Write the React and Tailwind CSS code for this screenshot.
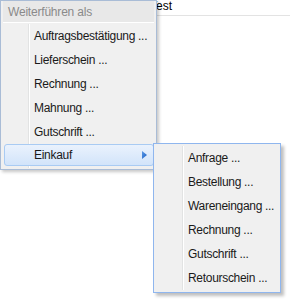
const mainItems = ['Auftragsbestätigung ...', 'Lieferschein ...', 'Rechnung ...', 'Mahnung ...', 'Gutschrift ...'];
const subItems = ['Anfrage ...', 'Bestellung ...', 'Wareneingang ...', 'Rechnung ...', 'Gutschrift ...', 'Retourschein ...'];

const font = { fontFamily: '"Liberation Sans", Arial, sans-serif' };

const MenuRow = ({ label }) => (
  <div className="h-[24px] flex items-center pl-[31px] text-[12px] tracking-[-0.3px] whitespace-nowrap text-[#1a1a1a]">{label}</div>
);

const App = () => {
  return (
    <div className="relative w-[290px] h-[301px] bg-white overflow-hidden" style={font}>
      {/* Background content behind the menus */}
      <div className="h-[16px] border-b border-[#e3e3e3] pl-[150px] text-[12px] leading-[13px] text-black whitespace-nowrap">Test</div>

      {/* Main menu */}
      <div className="absolute left-0 top-0 w-[157px] h-[170px] bg-[#f0f0f0] border border-[#a9bcd6] shadow-[2px_2px_3px_rgba(0,0,0,0.22)] px-[2px]">
        <div className="h-[21px] bg-[#e8e8e8] flex items-center pl-[5px] text-[12px] tracking-[-0.2px] text-[#8a8a8a] whitespace-nowrap">Weiterführen als</div>
        <div className="h-px bg-white" />
        <div className="relative pt-px">
          <div className="absolute left-[25px] top-px bottom-0 w-[2px] border-l border-[#e2e3e3] bg-white" />
          <div className="relative">
            {mainItems.map((label) => (
              <MenuRow key={label} label={label} />
            ))}
            <div className="h-[24px] pl-px">
              <div className="h-[22px] flex items-center justify-between pl-[29px] pr-[6px] rounded-[3px] border border-[#a9cbf3] bg-gradient-to-b from-[#eaf2fd] to-[#d2e4fa] text-[12px] tracking-[-0.3px] text-[#1a1a1a]">
                <span>Einkauf</span>
                <svg width="5" height="8" viewBox="0 0 5 8">
                  <defs>
                    <linearGradient id="arr" x1="0" y1="0" x2="1" y2="1">
                      <stop offset="0" stopColor="#5c9ae6" />
                      <stop offset="1" stopColor="#1a5fc4" />
                    </linearGradient>
                  </defs>
                  <path d="M0 0 L5 4 L0 8 Z" fill="url(#arr)" />
                </svg>
              </div>
            </div>
          </div>
        </div>
      </div>

      {/* Submenu */}
      <div className="absolute left-[153px] top-[143px] w-[128px] h-[150px] bg-[#f0f0f0] border border-[#8fb6ee] shadow-[3px_3px_3px_rgba(0,0,0,0.25)] p-[2px]">
        <div className="relative h-full">
          <div className="absolute left-[26px] top-0 bottom-0 w-[2px] border-l border-[#e2e3e3] bg-white" />
          <div className="relative">
            {subItems.map((label, i) => (
              <div key={i} className="h-[24px] flex items-center pl-[32px] text-[12px] tracking-[-0.3px] whitespace-nowrap text-[#1a1a1a]">{label}</div>
            ))}
          </div>
        </div>
      </div>
    </div>
  );
};

export default App;
